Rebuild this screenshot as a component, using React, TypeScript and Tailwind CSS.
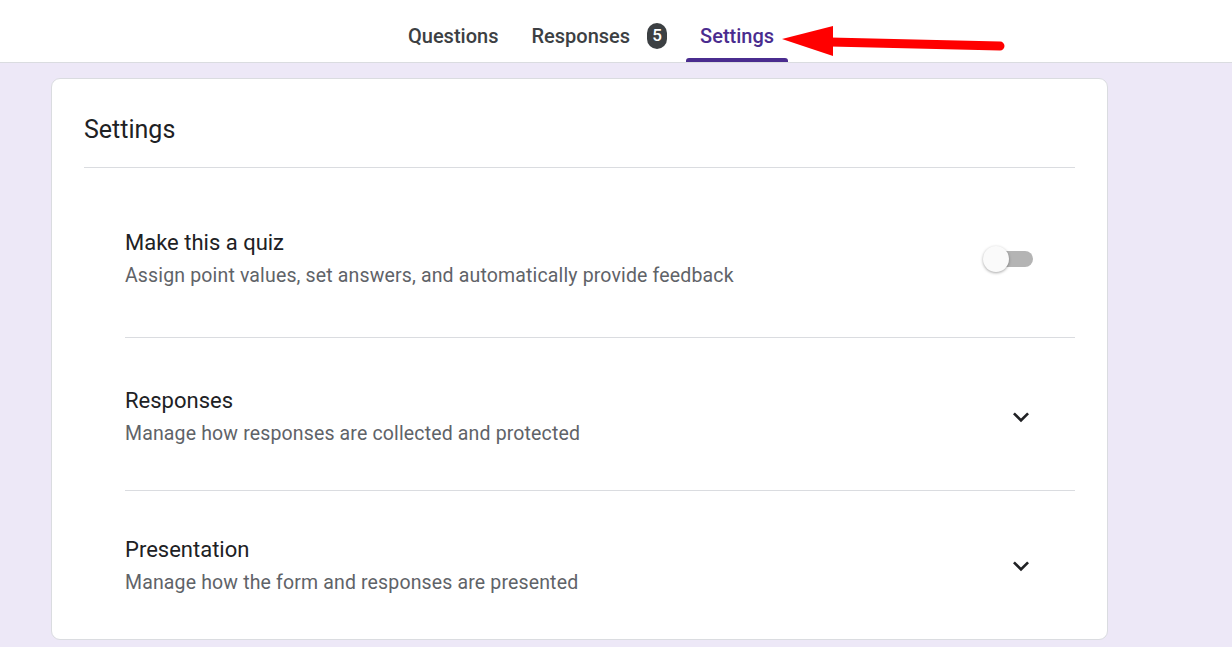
import { useState } from 'react';

type SettingRowProps = {
    title: string;
    desc: string;
    right: React.ReactNode;
    className: string;
    last?: boolean;
};

function ExpandMore() {
    return (
        <svg width="32" height="32" viewBox="0 0 24 24" className="fill-[#202124]">
            <path d="M16.59 8.59 12 13.17 7.41 8.59 6 10l6 6 6-6z" />
        </svg>
    );
}

function SettingRow({ title, desc, right, className, last }: SettingRowProps) {
    return (
        <div className={`flex items-center ${last ? '' : 'border-b border-[#dadce0]'} ${className}`}>
            <div className="flex-1">
                <div className="text-[22px] leading-[28px] text-[#202124]">{title}</div>
                <div className="mt-[7px] text-[19.5px] leading-[24px] tracking-[0.15px] text-[#5f6368]">{desc}</div>
            </div>
            {right}
        </div>
    );
}

export default function App() {
    const [quiz, setQuiz] = useState(false);

    return (
        <div className="min-h-[647px] bg-[#ede8f7] font-['Roboto',sans-serif]">
            {/* Top tabs bar */}
            <div className="relative h-[63px] bg-white border-b border-[#dadce0]">
                <div className="flex h-[62px] pl-[394px] text-[20px] font-medium">
                    <div className="flex items-center px-[14px] pt-[10px] text-[#3c4043]">Questions</div>
                    <div className="flex items-center pl-[19px] pr-[14px] pt-[10px] text-[#3c4043]">
                        Responses
                        <span className="ml-[17px] flex h-[26px] w-[20px] items-center justify-center rounded-full bg-[#3c4043] text-[17px] text-white">5</span>
                    </div>
                    <div className="relative flex items-center px-[14px] pt-[10px] ml-[5px] text-[#4a2c8f]">
                        Settings
                        <span className="absolute bottom-0 left-0 right-0 h-[4px] rounded-t-[3px] bg-[#4a2c8f]" />
                    </div>
                </div>
                {/* Red annotation arrow */}
                <svg className="absolute left-[780px] top-[24px]" width="232" height="36" viewBox="0 0 232 36">
                    <line x1="50" y1="18" x2="220" y2="22" stroke="#ff0000" strokeWidth="9" strokeLinecap="round" />
                    <polygon points="2,15 53,2 53,32" fill="#ff0000" />
                </svg>
            </div>

            {/* Settings card */}
            <div className="pt-[15px] pb-[8px]">
                <div className="ml-[51px] w-[1057px] rounded-[9px] border border-[#dadce0] bg-white px-[32px]">
                    <div className="border-b border-[#dadce0] pt-[35px] pb-[21px] text-[25px] leading-[32px] text-[#202124]">Settings</div>
                    <div className="pl-[41px]">
                        <SettingRow
                            title="Make this a quiz"
                            desc="Assign point values, set answers, and automatically provide feedback"
                            className="pt-[61px] pb-[49px]"
                            right={
                                <button
                                    onClick={() => setQuiz(!quiz)}
                                    className="relative mr-[42px] h-[16px] w-[36px] rounded-full bg-[#b4b4b4]"
                                >
                                    <span className="absolute left-[-14px] top-[-5px] h-[26px] w-[26px] rounded-full bg-[#fafafa] shadow-[0_1px_3px_rgba(0,0,0,0.35)]" />
                                </button>
                            }
                        />
                        <SettingRow
                            title="Responses"
                            desc="Manage how responses are collected and protected"
                            className="pt-[49px] pb-[44px]"
                            right={<div className="mr-[38px]"><ExpandMore /></div>}
                        />
                        <SettingRow
                            title="Presentation"
                            desc="Manage how the form and responses are presented"
                            className="pt-[45px] pb-[44px]"
                            right={<div className="mr-[38px]"><ExpandMore /></div>}
                            last
                        />
                    </div>
                </div>
            </div>
        </div>
    );
}
